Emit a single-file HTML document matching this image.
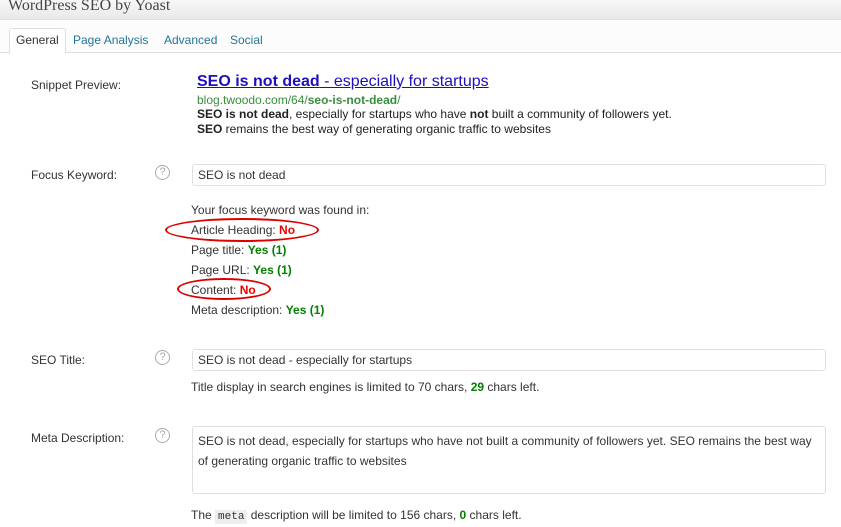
<!DOCTYPE html>
<html><head><style>
body{margin:0;width:841px;height:527px;overflow:hidden;background:#fff;font-family:"Liberation Sans",Arial,sans-serif;font-size:12px;color:#333;position:relative}
.a{position:absolute;white-space:nowrap}
.hdr{left:0;top:0;width:841px;height:19px;background:linear-gradient(#f7f7f7,#e9e9e9);border-bottom:1px solid #dfdfdf}
.tabbar{left:0;top:20px;width:841px;height:32px;background:#fcfcfc;border-bottom:1px solid #dfdfdf}
.tab{top:28px;height:24px;line-height:24px;color:#21759b}
.inp{border:1px solid #dfdfdf;border-radius:3px;background:#fff;box-sizing:border-box;padding:0 5px;color:#333}
.q{width:15px;height:15px;border:1px solid #aaa;border-radius:50%;box-sizing:border-box;color:#aaa;font-size:11px;text-align:center;line-height:13px}
.g{color:#008000;font-weight:bold}
.r{color:#e00;font-weight:bold}
.ell{border:2px solid #d00;border-radius:50%;box-sizing:border-box}
</style></head><body>
<div class="a hdr"></div>
<div class="a" style="left:8px;top:-3px;font-family:'Liberation Serif',serif;font-size:16px;color:#464646">WordPress SEO by Yoast</div>
<div class="a tabbar"></div>
<div class="a" style="left:9px;top:28px;width:55px;height:25px;background:#fff;border:1px solid #dfdfdf;border-bottom:none;border-radius:3px 3px 0 0"></div>
<div class="a tab" style="left:16px;color:#333">General</div>
<div class="a tab" style="left:73px">Page Analysis</div>
<div class="a tab" style="left:164px">Advanced</div>
<div class="a tab" style="left:230px">Social</div>

<div class="a" style="left:31px;top:78px">Snippet Preview:</div>
<div class="a" style="left:197px;top:73px;font-size:16px;color:#1e0fbe;text-decoration:underline"><b>SEO is not dead</b> - especially for startups</div>
<div class="a" style="left:197px;top:93px;color:#388e3c">blog.twoodo.com/64/<b>seo-is-not-dead</b>/</div>
<div class="a" style="left:197px;top:107px;color:#222"><b>SEO is not dead</b>, especially for startups who have <b>not</b> built a community of followers yet.</div>
<div class="a" style="left:197px;top:122px;color:#222"><b>SEO</b> remains the best way of generating organic traffic to websites</div>

<div class="a" style="left:31px;top:168px">Focus Keyword:</div>
<div class="a q" style="left:155px;top:165px">?</div>
<div class="a inp" style="left:192px;top:164px;width:634px;height:22px;line-height:20px">SEO is not dead</div>
<div class="a" style="left:191px;top:203px">Your focus keyword was found in:</div>
<div class="a" style="left:191px;top:223px">Article Heading: <span class="r">No</span></div>
<div class="a" style="left:191px;top:243px">Page title: <span class="g">Yes (1)</span></div>
<div class="a" style="left:191px;top:263px">Page URL: <span class="g">Yes (1)</span></div>
<div class="a" style="left:191px;top:283px">Content: <span class="r">No</span></div>
<div class="a" style="left:191px;top:303px">Meta description: <span class="g">Yes (1)</span></div>
<div class="a ell" style="left:165px;top:218px;width:154px;height:24px"></div>
<div class="a ell" style="left:177px;top:278px;width:94px;height:22px"></div>

<div class="a" style="left:31px;top:353px">SEO Title:</div>
<div class="a q" style="left:155px;top:350px">?</div>
<div class="a inp" style="left:192px;top:349px;width:634px;height:22px;line-height:20px">SEO is not dead - especially for startups</div>
<div class="a" style="left:191px;top:380px">Title display in search engines is limited to 70 chars, <span class="g">29</span> chars left.</div>

<div class="a" style="left:31px;top:431px">Meta Description:</div>
<div class="a q" style="left:155px;top:428px">?</div>
<div class="a inp" style="left:192px;top:426px;width:634px;height:68px;padding-top:4px;line-height:20px;white-space:normal">SEO is not dead, especially for startups who have not built a community of followers yet. SEO remains the best way of generating organic traffic to websites</div>
<div class="a" style="left:191px;top:508px">The <span style="font-family:'Liberation Mono',monospace;font-size:11px;background:#eee;padding:1px 3px">meta</span> description will be limited to 156 chars, <span class="g">0</span> chars left.</div>
</body></html>
